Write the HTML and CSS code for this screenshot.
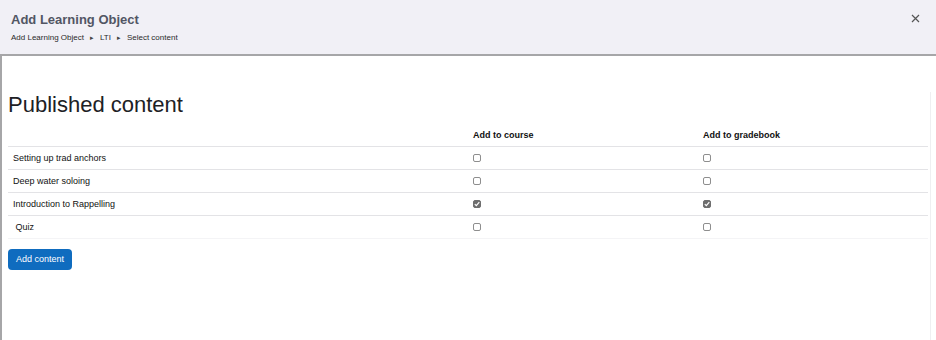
FILE: index.html
```html
<!DOCTYPE html>
<html lang="en">
<head>
    <meta charset="UTF-8">
    <meta name="viewport" content="width=device-width, initial-scale=1.0">
    <title>Add Learning Object</title>
    <link rel="stylesheet" href="styles.css">
</head>
<body>
    <div class="header">
        <div class="header-text">
            <h1 class="title">Add Learning Object</h1>
            <div class="breadcrumb">
                <span>Add Learning Object</span>
                <span class="sep">&#9656;</span>
                <span>LTI</span>
                <span class="sep">&#9656;</span>
                <span>Select content</span>
            </div>
        </div>
        <button class="close" aria-label="Close">
            <svg width="9" height="9" viewBox="0 0 9 9"><path d="M1 1L8 8M8 1L1 8" stroke="#555" stroke-width="1.2" fill="none"/></svg>
        </button>
    </div>

    <div class="main">
        <div class="content">
            <h2 class="page-title">Published content</h2>

            <table class="content-table">
                <thead>
                    <tr>
                        <th class="col-name"></th>
                        <th>Add to course</th>
                        <th>Add to gradebook</th>
                    </tr>
                </thead>
                <tbody>
                    <tr>
                        <td>Setting up trad anchors</td>
                        <td><span class="box"></span></td>
                        <td><span class="box"></span></td>
                    </tr>
                    <tr>
                        <td>Deep water soloing</td>
                        <td><span class="box"></span></td>
                        <td><span class="box"></span></td>
                    </tr>
                    <tr>
                        <td>Introduction to Rappelling</td>
                        <td><span class="box checked"><svg width="8" height="8" viewBox="0 0 8 8"><path d="M1.8 4.2L3.3 5.7L6.3 2.2" stroke="#fff" stroke-width="1.2" fill="none"/></svg></span></td>
                        <td><span class="box checked"><svg width="8" height="8" viewBox="0 0 8 8"><path d="M1.8 4.2L3.3 5.7L6.3 2.2" stroke="#fff" stroke-width="1.2" fill="none"/></svg></span></td>
                    </tr>
                    <tr class="last">
                        <td>&nbsp;Quiz</td>
                        <td><span class="box"></span></td>
                        <td><span class="box"></span></td>
                    </tr>
                </tbody>
            </table>

            <button class="btn-primary">Add content</button>
        </div>
    </div>
</body>
</html>
```
FILE: styles.css
```css
* {
    margin: 0;
    padding: 0;
    box-sizing: border-box;
}

body {
    font-family: "Liberation Sans", Arial, sans-serif;
    background-color: #fff;
    color: #1d2125;
    width: 936px;
    height: 340px;
    overflow: hidden;
}

.header {
    display: flex;
    justify-content: space-between;
    align-items: flex-start;
    height: 56px;
    padding: 12px 16px 0 11px;
    background-color: #f1f0f6;
    border-bottom: 2px solid #a6a6a8;
}

.title {
    font-size: 13px;
    line-height: 16px;
    font-weight: bold;
    color: #525664;
}

.breadcrumb {
    margin-top: 4px;
    font-size: 8px;
    line-height: 12px;
    color: #2a2a2a;
    display: flex;
    gap: 6px;
}

.breadcrumb .sep {
    font-size: 7px;
    color: #444;
}

.close {
    background: none;
    border: none;
    margin-top: 2px;
    width: 9px;
    height: 9px;
    display: flex;
}

.main {
    height: 284px;
    border-left: 2px solid #a6a6a8;
    padding: 36px 5px 0 6px;
}

.content {
    height: 100%;
    padding-right: 2px;
    border-right: 1px solid #efeff1;
}

.page-title {
    font-size: 22px;
    line-height: 26px;
    font-weight: normal;
    color: #1d2125;
    margin-bottom: 6px;
}

.content-table {
    width: 920px;
    border-collapse: collapse;
    table-layout: fixed;
}

.content-table th,
.content-table td {
    padding: 5px 5px;
    font-size: 9px;
    line-height: 12px;
    text-align: left;
    border-bottom: 1px solid #e3e3e6;
}

.content-table th {
    font-weight: bold;
    color: #111;
}

.content-table .col-name {
    width: 460px;
}

.content-table td {
    color: #111;
}

.content-table tr.last td {
    border-bottom-color: #f4f4f6;
}

.box {
    display: block;
    width: 8px;
    height: 8px;
    border: 1px solid #8e8e8e;
    border-radius: 2px;
    background: #fff;
}

.box.checked {
    border-color: #6e6e6e;
    background: #6e6e6e;
    display: flex;
    align-items: center;
    justify-content: center;
}

.box.checked svg {
    flex: none;
}

.btn-primary {
    margin-top: 10px;
    background: #0f6cbf;
    color: #fff;
    border: none;
    border-radius: 4px;
    font-family: "Liberation Sans", Arial, sans-serif;
    font-size: 9px;
    line-height: 11px;
    padding: 5px 8px;
    white-space: nowrap;
}
```
